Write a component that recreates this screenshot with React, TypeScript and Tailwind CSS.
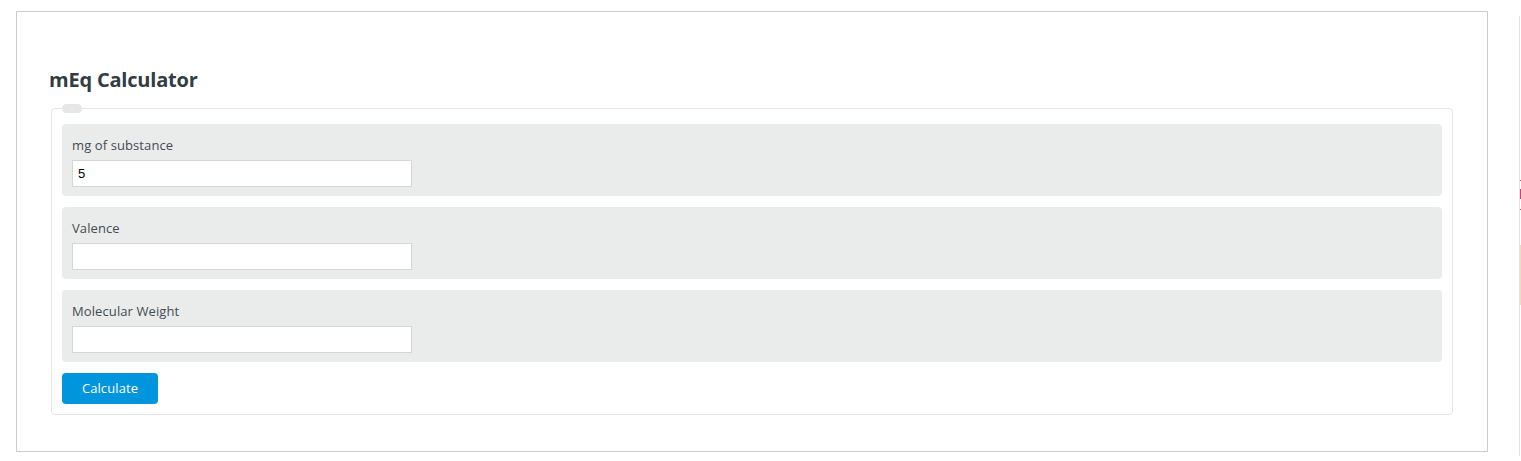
import React, { useState } from 'react';

const fields = [
  { label: 'mg of substance', value: '5' },
  { label: 'Valence', value: '' },
  { label: 'Molecular Weight', value: '' },
];

const Field: React.FC<{ label: string; initial: string }> = ({ label, initial }) => {
  const [value, setValue] = useState(initial);
  return (
    <div className="bg-[#eaebeb] rounded-[4px] px-[10px] pt-[11px] h-[72px]">
      <label className="block text-[13px] leading-[20px] text-[#444b52] mb-[5px] tracking-[0.1px]">{label}</label>
      <input
        type="text"
        value={value}
        onChange={(e) => setValue(e.target.value)}
        className="block w-[340px] h-[27px] bg-white border border-[#d6d6d6] px-[5px] text-[13px] text-black outline-none font-['Liberation_Sans',Arial,sans-serif]"
      />
    </div>
  );
};

export default function App() {
  return (
    <div className="flex items-start bg-white w-[1521px] h-[461px] pl-[16px] pt-[11px] font-['Open_Sans',sans-serif]">
      {/* main card */}
      <div className="w-[1472px] h-[441px] border border-[#cccccc] bg-white px-[32px] pt-[56px]">
        <h2 className="text-[20px] leading-[24px] font-bold text-[#333b43] tracking-[-0.2px]">mEq Calculator</h2>

        <fieldset className="mx-[2px] mt-[12px] border border-[#e6e6e6] rounded-[4px] px-[10px] pb-[10px]">
          <legend className="block w-[20px] h-[9px] rounded-full bg-[#e6e6e6]" />
          <div className="flex flex-col gap-[11px] mt-[11px]">
            {fields.map((f) => (
              <Field key={f.label} label={f.label} initial={f.value} />
            ))}
            <div>
              <button className="w-[96px] h-[31px] rounded-[4px] bg-[#0095dc] text-white text-[13px] leading-none tracking-[0.1px]">
                Calculate
              </button>
            </div>
          </div>
        </fieldset>
      </div>

      {/* edge of the neighbouring column */}
      <div className="ml-[31px] mt-[5px] w-[2px] h-[440px] flex flex-col border-l border-[#e2e2e2]">
        <div className="h-[164px]" />
        <div className="h-[1px] bg-[#e04b4b]" />
        <div className="h-[8px]" />
        <div className="h-[10px] bg-[#e0357a]" />
        <div className="h-[10px]" />
        <div className="h-[1px] bg-[#e04b4b]" />
        <div className="h-[35px]" />
        <div className="h-[60px] bg-[#f6dcaf]" />
      </div>
    </div>
  );
}
